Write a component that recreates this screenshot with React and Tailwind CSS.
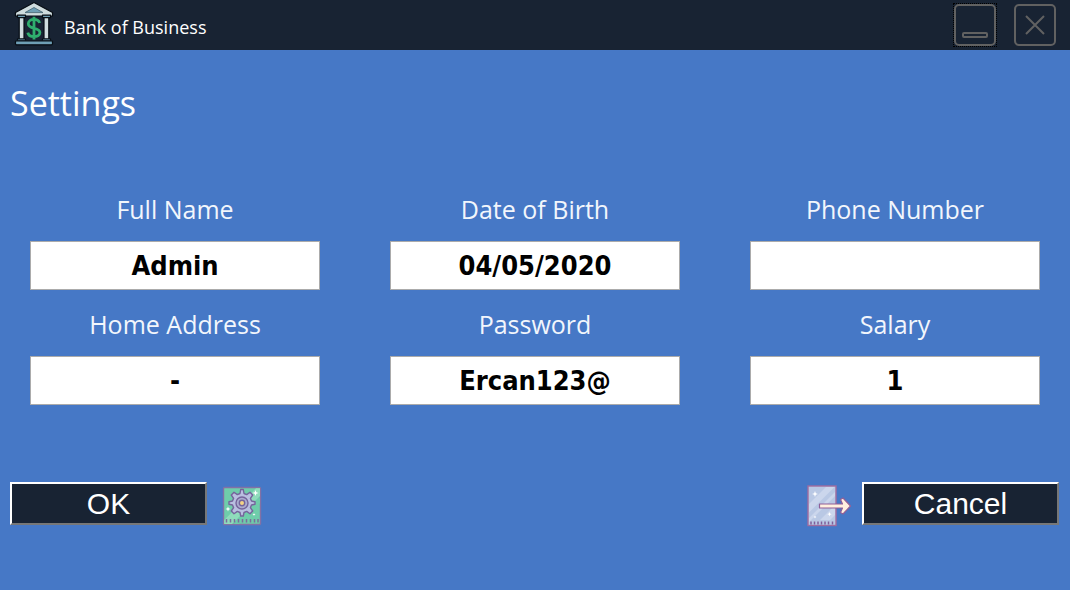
import { useState } from "react";

const FIELDS = [
  { id: "full-name", label: "Full Name", value: "Admin" },
  { id: "birth-date", label: "Date of Birth", value: "04/05/2020" },
  { id: "phone", label: "Phone Number", value: "" },
  { id: "address", label: "Home Address", value: "-" },
  { id: "password", label: "Password", value: "Ercan123@" },
  { id: "salary", label: "Salary", value: "1" },
];

function BankLogo() {
  return (
    <svg viewBox="0 0 40 44" className="h-11 w-10 shrink-0" aria-hidden="true">
      <g stroke="#070d14" strokeWidth="1.2" strokeLinejoin="round">
        <path d="M20 .5 38.500 10.500v3.500H1.500v-3.500Z" fill="#cfdcde" />
        <path d="M20 5.500 29 10.600H11Z" fill="#6f9fb5" stroke="#43616f" strokeWidth="0.8" />
        <rect x="5.200" y="15" width="4.800" height="23" fill="#cfdcde" />
        <rect x="30" y="15" width="4.800" height="23" fill="#cfdcde" />
        <rect x="3.500" y="13.200" width="8" height="2.400" fill="#6f9fb5" />
        <rect x="28.500" y="13.200" width="8" height="2.400" fill="#6f9fb5" />
        <rect x="3.500" y="36.800" width="8" height="2.200" fill="#6f9fb5" />
        <rect x="28.500" y="36.800" width="8" height="2.200" fill="#6f9fb5" />
        <rect x="1.500" y="38.800" width="37" height="4" rx="1" fill="#6f9fb5" />
      </g>
      <path
        d="M25.600 21c-.6-2.300-2.700-3.600-5.600-3.600-3.200 0-5.700 1.700-5.700 4.300 0 6.200 11.600 3 11.600 8.800 0 2.600-2.500 4.200-5.900 4.200-3.200 0-5.600-1.400-6.200-4.100M20 14.800v22.600"
        fill="none"
        stroke="#2fae6e"
        strokeWidth="2.800"
      />
    </svg>
  );
}

function MinimizeIcon() {
  return (
    <svg viewBox="0 0 42 42" className="size-full" fill="none" stroke="#616161" strokeWidth="2" aria-hidden="true">
      <rect x="1" y="1" width="40" height="40" rx="4" />
      <rect x="9" y="29" width="24" height="4" rx="1" />
    </svg>
  );
}

function CloseIcon() {
  return (
    <svg viewBox="0 0 42 42" className="size-full" fill="none" stroke="#616161" strokeWidth="2" aria-hidden="true">
      <rect x="1" y="1" width="40" height="40" rx="4" />
      <path d="m12 12 18 18M30 12 12 30" />
    </svg>
  );
}

function GearIcon() {
  return (
    <svg viewBox="0 0 40 40" className="size-10 shrink-0" aria-hidden="true">
      <rect x="1.5" y="1.5" width="37" height="37" rx="1" fill="#6fcdaa" stroke="#8270a6" strokeWidth="1.4" />
      <path d="M2.2 34 34 2.2h4V10L10 38H2.2Z" fill="#8fdcbb" />
      <path d="M12 38 38 12v5L17 38Z" fill="#6fcdaa" />
      <path
        d="M4.5 36.500V33M8.500 36.500V33M12.500 36.500V33M16.500 36.500V33M20.500 36.500V33M24.500 36.500V33M28.500 36.500V33M32.500 36.500V33M36 36.500V33"
        stroke="#7c6b9c"
        strokeWidth="1.500"
      />
      <g fill="#b9bfe0" stroke="#75649b" strokeWidth="1.400" strokeLinejoin="round">
        <path
          transform="translate(0 -1)"
          d="m18 8.500.7-4h2.600l.7 4 2.700 1.100 3.300-2.300 2.700 2.700-2.300 3.300 1.100 2.700 3.500.700v2.600l-3.500.700-1.100 2.700 2.300 3.300-2.700 2.700-3.300-2.300-2.700 1.100-.7 3.500h-2.600l-.7-3.500-2.700-1.100-3.300 2.300-2.700-2.700 2.300-3.300-1.100-2.700-3.500-.700v-2.600l3.500-.700 1.100-2.700-2.300-3.300 2.700-2.700 3.300 2.300Z"
        />
        <circle cx="20" cy="17" r="6" fill="#aaaccf" />
        <circle cx="20" cy="17" r="2.700" fill="#f5d384" />
      </g>
      <path
        d="m33.500 4 .8 2.200 2.200.8-2.200.8-.8 2.200-.8-2.200-2.200-.8 2.200-.8ZM6 20.500l.7 1.800 1.800.7-1.800.7L6 25.500l-.7-1.800-1.800-.7 1.800-.7ZM32 27l.4 1.100 1.100.4-1.100.4L32 30l-.4-1.100-1.100-.4 1.100-.4Z"
        fill="#fff"
      />
    </svg>
  );
}

function ExitIcon() {
  return (
    <svg viewBox="0 0 46 44" className="h-11 w-[46px] shrink-0" aria-hidden="true">
      <rect x="2" y="2" width="28" height="39.500" fill="#b9c8e4" stroke="#a16c9f" strokeWidth="1.400" />
      <path d="M3 20 20 3h8.500L3 28.500ZM3 34 29 8v4L3 38ZM14 36l15-15v10l-5 5Z" fill="#cbd6ec" />
      <path
        d="M5 40.500V37.500M8.500 40.500V37.500M12 40.500V37.500M15.500 40.500V37.500M19 40.500V37.500M22.500 40.500V37.500M26.500 40.500V37.500"
        stroke="#7f5f9b"
        strokeWidth="1.500"
      />
      <path
        d="M13.500 20h23l-2-4.500 2.500-1.500 7.500 8-7.500 8-2.500-1.500 2-4.500h-23Z"
        fill="#fff0df"
        stroke="#915f98"
        strokeWidth="1.200"
        strokeLinejoin="round"
      />
      <path
        d="m9 7 .8 2.200 2.200.8-2.200.8L9 13l-.8-2.200L6 10l2.200-.8ZM23.500 28l.6 1.600 1.600.6-1.600.6-.6 1.600-.6-1.600-1.600-.6 1.600-.6ZM9 31.500l.4 1.100 1.100.4-1.100.4L9 34.500l-.4-1.100-1.100-.4 1.100-.4Z"
        fill="#fff"
      />
    </svg>
  );
}

function ActionButton({ children }) {
  return (
    <button
      type="button"
      className="h-[43px] w-[197px] border-2 border-t-white border-r-[#777] border-b-[#777] border-l-white bg-[#182333] font-['Liberation_Sans',sans-serif] text-3xl leading-none text-white"
    >
      {children}
    </button>
  );
}

function Field({ id, label, value }) {
  const [text, setText] = useState(value);
  return (
    <div className="flex flex-col">
      <label htmlFor={id} className="pb-4 text-center text-[25px] leading-8 text-[#f2f6fc]">
        {label}
      </label>
      <input
        id={id}
        type="text"
        value={text}
        onChange={(e) => setText(e.target.value)}
        className="h-[49px] w-full min-w-0 border border-[#ababab] bg-white text-center font-['DejaVu_Sans_Condensed','Noto_Sans',sans-serif] text-[27px] font-bold text-black"
      />
    </div>
  );
}

export default function App() {
  return (
    <div className="flex min-h-screen flex-col bg-[#4678c6] font-['Open_Sans',sans-serif] text-white">
      <header className="flex h-[50px] items-center justify-between bg-[#182333] px-3.5">
        <div className="flex items-center gap-2.5">
          <div className="pb-0.5">
            <BankLogo />
          </div>
          <span className="pt-1 text-lg">Bank of Business</span>
        </div>
        <div className="flex gap-[18px]">
          <button
            type="button"
            aria-label="Minimize"
            className="size-[42px] outline-1 outline-black outline-dotted"
          >
            <MinimizeIcon />
          </button>
          <button type="button" aria-label="Close" className="size-[42px]">
            <CloseIcon />
          </button>
        </div>
      </header>

      <main className="flex flex-col">
        <h1 className="px-2.5 pt-7 text-[34px] leading-[50px]">Settings</h1>
        <form className="flex flex-col pt-[65px]">
          <div className="grid grid-cols-3 gap-x-[70px] gap-y-[18px] px-[30px]">
            {FIELDS.map((field) => (
              <Field key={field.id} {...field} />
            ))}
          </div>
          <div className="flex items-start justify-between pt-[77px] pr-[11px] pl-2.5">
            <div className="flex items-start gap-[15px]">
              <ActionButton>OK</ActionButton>
              <div className="pt-1">
                <GearIcon />
              </div>
            </div>
            <div className="flex items-start gap-2.5">
              <div className="pt-0.5">
                <ExitIcon />
              </div>
              <ActionButton>Cancel</ActionButton>
            </div>
          </div>
        </form>
      </main>
    </div>
  );
}
